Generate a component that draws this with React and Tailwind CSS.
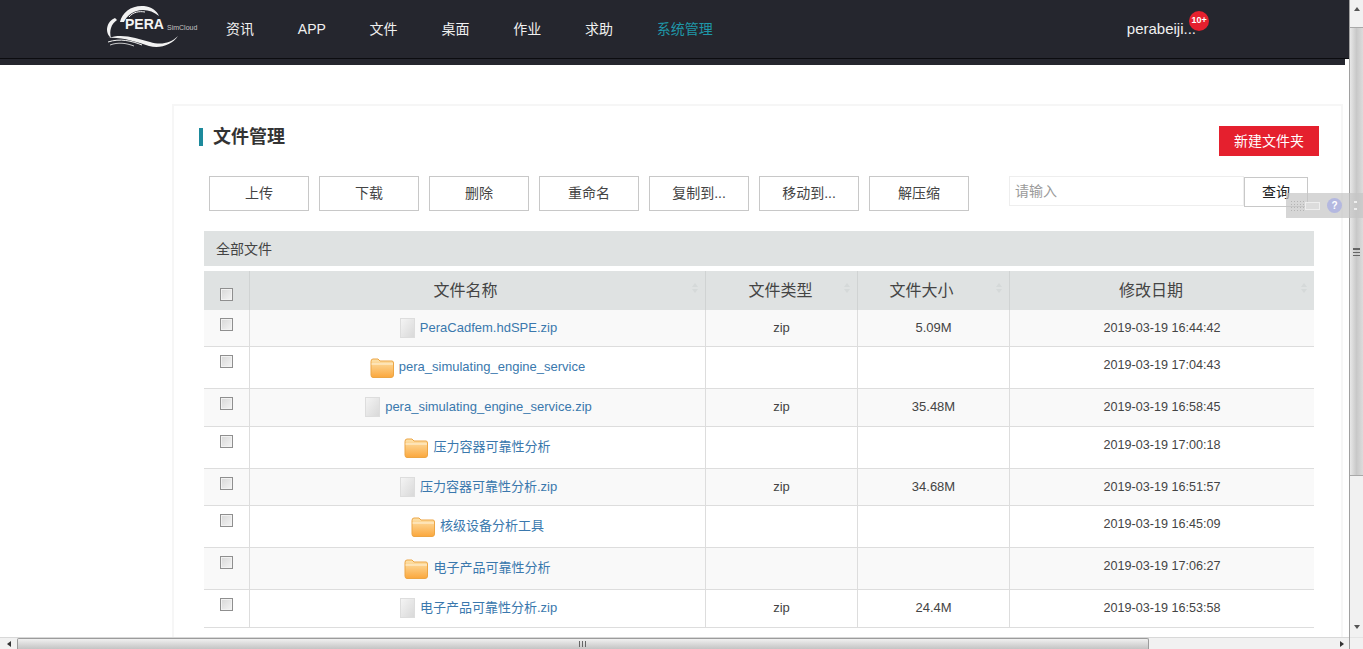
import React from 'react';

const FONT = "font-['Liberation_Sans','Noto_Sans_CJK_SC',sans-serif]";

const navItems = ['资讯', 'APP', '文件', '桌面', '作业', '求助', '系统管理'];
const actions = ['上传', '下载', '删除', '重命名', '复制到...', '移动到...', '解压缩'];

const rows = [
  { name: 'PeraCadfem.hdSPE.zip', type: 'zip', size: '5.09M', date: '2019-03-19 16:44:42', h: 'h-[37px]', shade: true },
  { name: 'pera_simulating_engine_service', folder: true, date: '2019-03-19 17:04:43', h: 'h-[42px]' },
  { name: 'pera_simulating_engine_service.zip', type: 'zip', size: '35.48M', date: '2019-03-19 16:58:45', h: 'h-[38px]', shade: true, lift: true },
  { name: '压力容器可靠性分析', folder: true, date: '2019-03-19 17:00:18', h: 'h-[42px]' },
  { name: '压力容器可靠性分析.zip', type: 'zip', size: '34.68M', date: '2019-03-19 16:51:57', h: 'h-[37px]', shade: true },
  { name: '核级设备分析工具', folder: true, date: '2019-03-19 16:45:09', h: 'h-[42px]' },
  { name: '电子产品可靠性分析', folder: true, date: '2019-03-19 17:06:27', h: 'h-[42px]', shade: true },
  { name: '电子产品可靠性分析.zip', type: 'zip', size: '24.4M', date: '2019-03-19 16:53:58', h: 'h-[38px]', lift: true },
];

function Logo() {
  return (
    <div className="relative h-[50px] w-[94px] shrink-0">
      <svg viewBox="0 0 94 50" className="absolute inset-0 h-full w-full" fill="none">
        {/* cloud arcs */}
        <path d="M16 18C18 8 28 1 40 2C48 3 53 7 55 12C50 8 45 6 39 6C30 6 23 11 20 18Z" fill="#f2f2f2" />
        <path d="M25 13C29 8 35 7 41 8" stroke="#f2f2f2" strokeWidth="1" />
        <path d="M11 14C3 17 0 28 7 34C5 27 7 20 13 16Z" fill="#f2f2f2" />
        {/* waves */}
        <path d="M4 34C18 29 32 34 46 38C56 41 66 40 74 32C68 41 56 45 45 42C32 38 18 33 4 34Z" fill="#f2f2f2" />
        <path d="M4 38C16 34 28 37 38 41" stroke="#f2f2f2" strokeWidth="1" />
        <path d="M6 41C14 38 22 39 30 42" stroke="#f2f2f2" strokeWidth="0.8" />
      </svg>
      <span className="absolute left-[21px] top-[11px] text-[14px] font-bold leading-[18px] text-[#f4f4f4]">PERA</span>
      <span className="absolute left-[63px] top-[19px] text-[7px] leading-[10px] text-[#c4c4c4]">SimCloud</span>
    </div>
  );
}

function FileIcon() {
  return <span className="mr-[5px] inline-block h-[20px] w-[15px] shrink-0 border border-[#dddddd] bg-gradient-to-br from-[#f4f4f4] to-[#d9d9d9]" />;
}

function FolderIcon() {
  return (
    <svg viewBox="0 0 24 20" className="mr-[5px] h-[20px] w-[24px] shrink-0">
      <defs>
        <linearGradient id="folderFill" x1="0" y1="0" x2="0" y2="1">
          <stop offset="0" stopColor="#fde3ad" />
          <stop offset="1" stopColor="#fba73c" />
        </linearGradient>
      </defs>
      <path d="M1 3.5Q1 1 3 1H8L10 3H22Q23.5 3 23.5 5V17Q23.5 19.5 21 19.5H3Q1 19.5 1 17Z" fill="url(#folderFill)" stroke="#eca544" />
      <path d="M1.5 6H23" stroke="#fff4dc" />
    </svg>
  );
}

function Checkbox() {
  return <span className="block h-[13px] w-[13px] border border-[#8f8f8f] bg-gradient-to-br from-[#d8d8d8] to-[#f4f4f4] shadow-[inset_0_0_0_1px_#f2f2f2]" />;
}

function SortMark() {
  return (
    <span className="absolute right-[7px] top-[12px] flex flex-col gap-[2px] opacity-60">
      <span className="h-0 w-0 border-x-[3px] border-b-[4px] border-x-transparent border-b-[#d0d4d4]" />
      <span className="h-0 w-0 border-x-[3px] border-t-[4px] border-x-transparent border-t-[#d0d4d4]" />
    </span>
  );
}

function HeaderCell({ children, className }) {
  return (
    <div className={`relative flex items-center justify-center border-r border-[#d0d3d3] text-[16px] text-[#444444] ${className}`}>
      {children}
      <SortMark />
    </div>
  );
}

function Row({ row }) {
  const lift = row.lift ? 'pb-[1px]' : '';
  return (
    <div className={`flex border-b border-[#dddddd] text-[13px] text-[#444444] ${row.h} ${row.shade ? 'bg-[#f9f9f9]' : 'bg-white'}`}>
      <div className="flex w-[46px] shrink-0 justify-center border-r border-[#dddddd] pr-[1px] pt-[8px]">
        <Checkbox />
      </div>
      <div className={`flex w-[456px] shrink-0 items-center justify-center border-r border-[#dddddd] text-[#3a78ad] ${row.folder ? '' : 'pl-[2px]'} ${lift}`}>
        {row.folder ? <FolderIcon /> : <FileIcon />}
        <span className={row.folder ? 'pb-[2px]' : ''}>{row.name}</span>
      </div>
      <div className={`flex w-[152px] shrink-0 items-center justify-center border-r border-[#dddddd] ${lift}`}>{row.type}</div>
      <div className={`flex w-[152px] shrink-0 items-center justify-center border-r border-[#dddddd] ${lift}`}>{row.size}</div>
      <div className={`flex w-[305px] items-center justify-center text-[12.6px] ${row.folder ? 'pb-[4px]' : lift}`}>{row.date}</div>
    </div>
  );
}

function VScrollbar() {
  return (
    <div className="flex w-[14px] shrink-0 flex-col border-l border-[#a0a0a0] bg-[#f1f1f1]">
      <div className="flex h-[27px] shrink-0 items-center justify-center pb-[10px]">
        <span className="h-0 w-0 border-x-[3px] border-b-[4px] border-x-transparent border-b-[#555555]" />
      </div>
      <div className="flex h-[449px] shrink-0 items-center justify-center border-y border-[#a8a8a8] bg-gradient-to-r from-[#e8e8e8] via-[#c8c8c8] to-[#dcdcdc]">
        <span className="h-[8px] w-[7px] border-y border-[#666666] bg-[linear-gradient(#666_1px,transparent_1px)] bg-[length:100%_3px]" />
      </div>
      <div className="flex flex-1 items-end justify-center pb-[8px]">
        <span className="h-0 w-0 border-x-[3px] border-t-[4px] border-x-transparent border-t-[#555555]" />
      </div>
      <div className="h-[12px] shrink-0 border-t border-[#e4e4e4]" />
    </div>
  );
}

function HScrollbar() {
  return (
    <div className="flex h-[12px] shrink-0 border-t border-[#d8d8d8] bg-[#f1f1f1]">
      <div className="flex w-[17px] shrink-0 items-center justify-center">
        <span className="h-0 w-0 border-y-[3px] border-r-[4px] border-y-transparent border-r-[#333333]" />
      </div>
      <div className="flex w-[1132px] shrink-0 items-center justify-center rounded-t-[2px] border border-b-0 border-[#9c9c9c] bg-gradient-to-b from-[#f0f0f0] to-[#c4c4c4]">
        <span className="h-[6px] w-[8px] bg-[linear-gradient(90deg,#666_1px,transparent_1px)] bg-[length:3px_100%]" />
      </div>
      <div className="flex flex-1 items-center justify-end pr-[5px]">
        <span className="h-0 w-0 border-y-[3px] border-l-[4px] border-y-transparent border-l-[#333333]" />
      </div>
    </div>
  );
}

export default function App() {
  return (
    <div className={`relative flex h-[649px] w-[1363px] overflow-hidden bg-white ${FONT}`}>
      <div className="flex min-w-0 flex-1 flex-col">
        <div className="min-h-0 flex-1 overflow-hidden">
          {/* Top navigation */}
          <header className="h-[59px] border-b border-[#0c0c10] bg-[#25262e]">
            <div className="flex h-full items-center pl-[104px]">
              <Logo />
              <nav className="ml-[28px] flex items-center gap-[43.8px] text-[14px] text-[#f0f0f0]">
                {navItems.map((item) => (
                  <a key={item} className={item === '系统管理' ? 'text-[#1f97a8]' : ''}>{item}</a>
                ))}
              </nav>
              <div className="relative ml-[414px] text-[15px] text-[#f0f0f0]">
                perabeiji...
                <span className="absolute right-[-13px] top-[-7px] flex h-[20px] w-[20px] items-center justify-center rounded-full bg-[#e5202e] text-[9px] font-bold text-white">10+</span>
              </div>
            </div>
          </header>
          <div className="mr-[4px] h-[6px] bg-[#25262e]" />

          {/* File manager card */}
          <main className="ml-[172px] mr-[6px] mt-[39px] h-[600px] border-x-[2px] border-t-[2px] border-[#f6f6f6] pl-[25px]">
            <div className="flex h-[64px] justify-between pr-[22px] pt-[20px]">
              <h2 className="mt-[2px] flex h-[18px] items-center border-l-[4px] border-[#1d8a9c] pl-[10px] text-[18px] font-bold text-[#333333]">文件管理</h2>
              <button className="h-[30px] w-[100px] bg-[#e5202e] text-[14px] text-white">新建文件夹</button>
            </div>
            <div className="flex pl-[10px] pt-[6px]">
              <div className="flex gap-[10px]">
                {actions.map((a) => (
                  <button key={a} className="h-[35px] w-[100px] border border-[#c8c8c8] bg-white text-[14px] text-[#444444]">{a}</button>
                ))}
              </div>
              <div className="ml-[40px] flex h-[31px] w-[299px]">
                <div className="flex h-[30px] w-[235px] items-center border border-[#eeeeee] pl-[5px] pt-[1px] text-[14px] text-[#9a9a9a]">请输入</div>
                <button className="mt-[1px] h-[30px] w-[64px] border border-[#c8c8c8] bg-white text-[14px] text-[#222222]">查询</button>
              </div>
            </div>

            <div className="ml-[5px] mt-[20px] w-[1110px]">
              <div className="flex h-[35px] items-center bg-[#dfe2e2] pl-[12px] pt-[1px] text-[14px] text-[#444444]">全部文件</div>
              <div className="mt-[5px] flex h-[39px] bg-[#dfe2e2]">
                <div className="flex w-[46px] shrink-0 justify-center border-r border-[#d0d3d3] pr-[1px] pt-[17px]">
                  <Checkbox />
                </div>
                <HeaderCell className="w-[456px] shrink-0 pr-[24px]">文件名称</HeaderCell>
                <HeaderCell className="w-[152px] shrink-0 pr-[2px]">文件类型</HeaderCell>
                <HeaderCell className="w-[152px] shrink-0 pr-[24px]">文件大小</HeaderCell>
                <HeaderCell className="w-[305px] border-r-0 pr-[22px]">修改日期</HeaderCell>
              </div>
              {rows.map((row) => (
                <Row key={row.name} row={row} />
              ))}
            </div>
          </main>
        </div>
        <HScrollbar />
      </div>
      <VScrollbar />

      {/* IME toolbar floating over the page */}
      <div className="absolute left-[1286px] top-[193px] flex h-[25px] w-[77px] items-center bg-[#c4c4c4]/70 pl-[4px]">
        <span className="h-[12px] w-[15px] bg-[radial-gradient(#b4b4b4_1px,transparent_1px)] bg-[length:3px_3px]" />
        <span className="h-[8px] w-[15px] border border-[#eeeeee] bg-[#dcdcdc]" />
        <span className="ml-[7px] flex h-[15px] w-[15px] items-center justify-center rounded-full bg-[#b4b8e0] text-[10px] font-bold text-white">?</span>
        <span className="ml-[12px] flex flex-col gap-[5px]">
          <span className="h-[2px] w-[3px] bg-[#eeeeee]" />
          <span className="h-[2px] w-[3px] bg-[#eeeeee]" />
        </span>
      </div>
    </div>
  );
}
